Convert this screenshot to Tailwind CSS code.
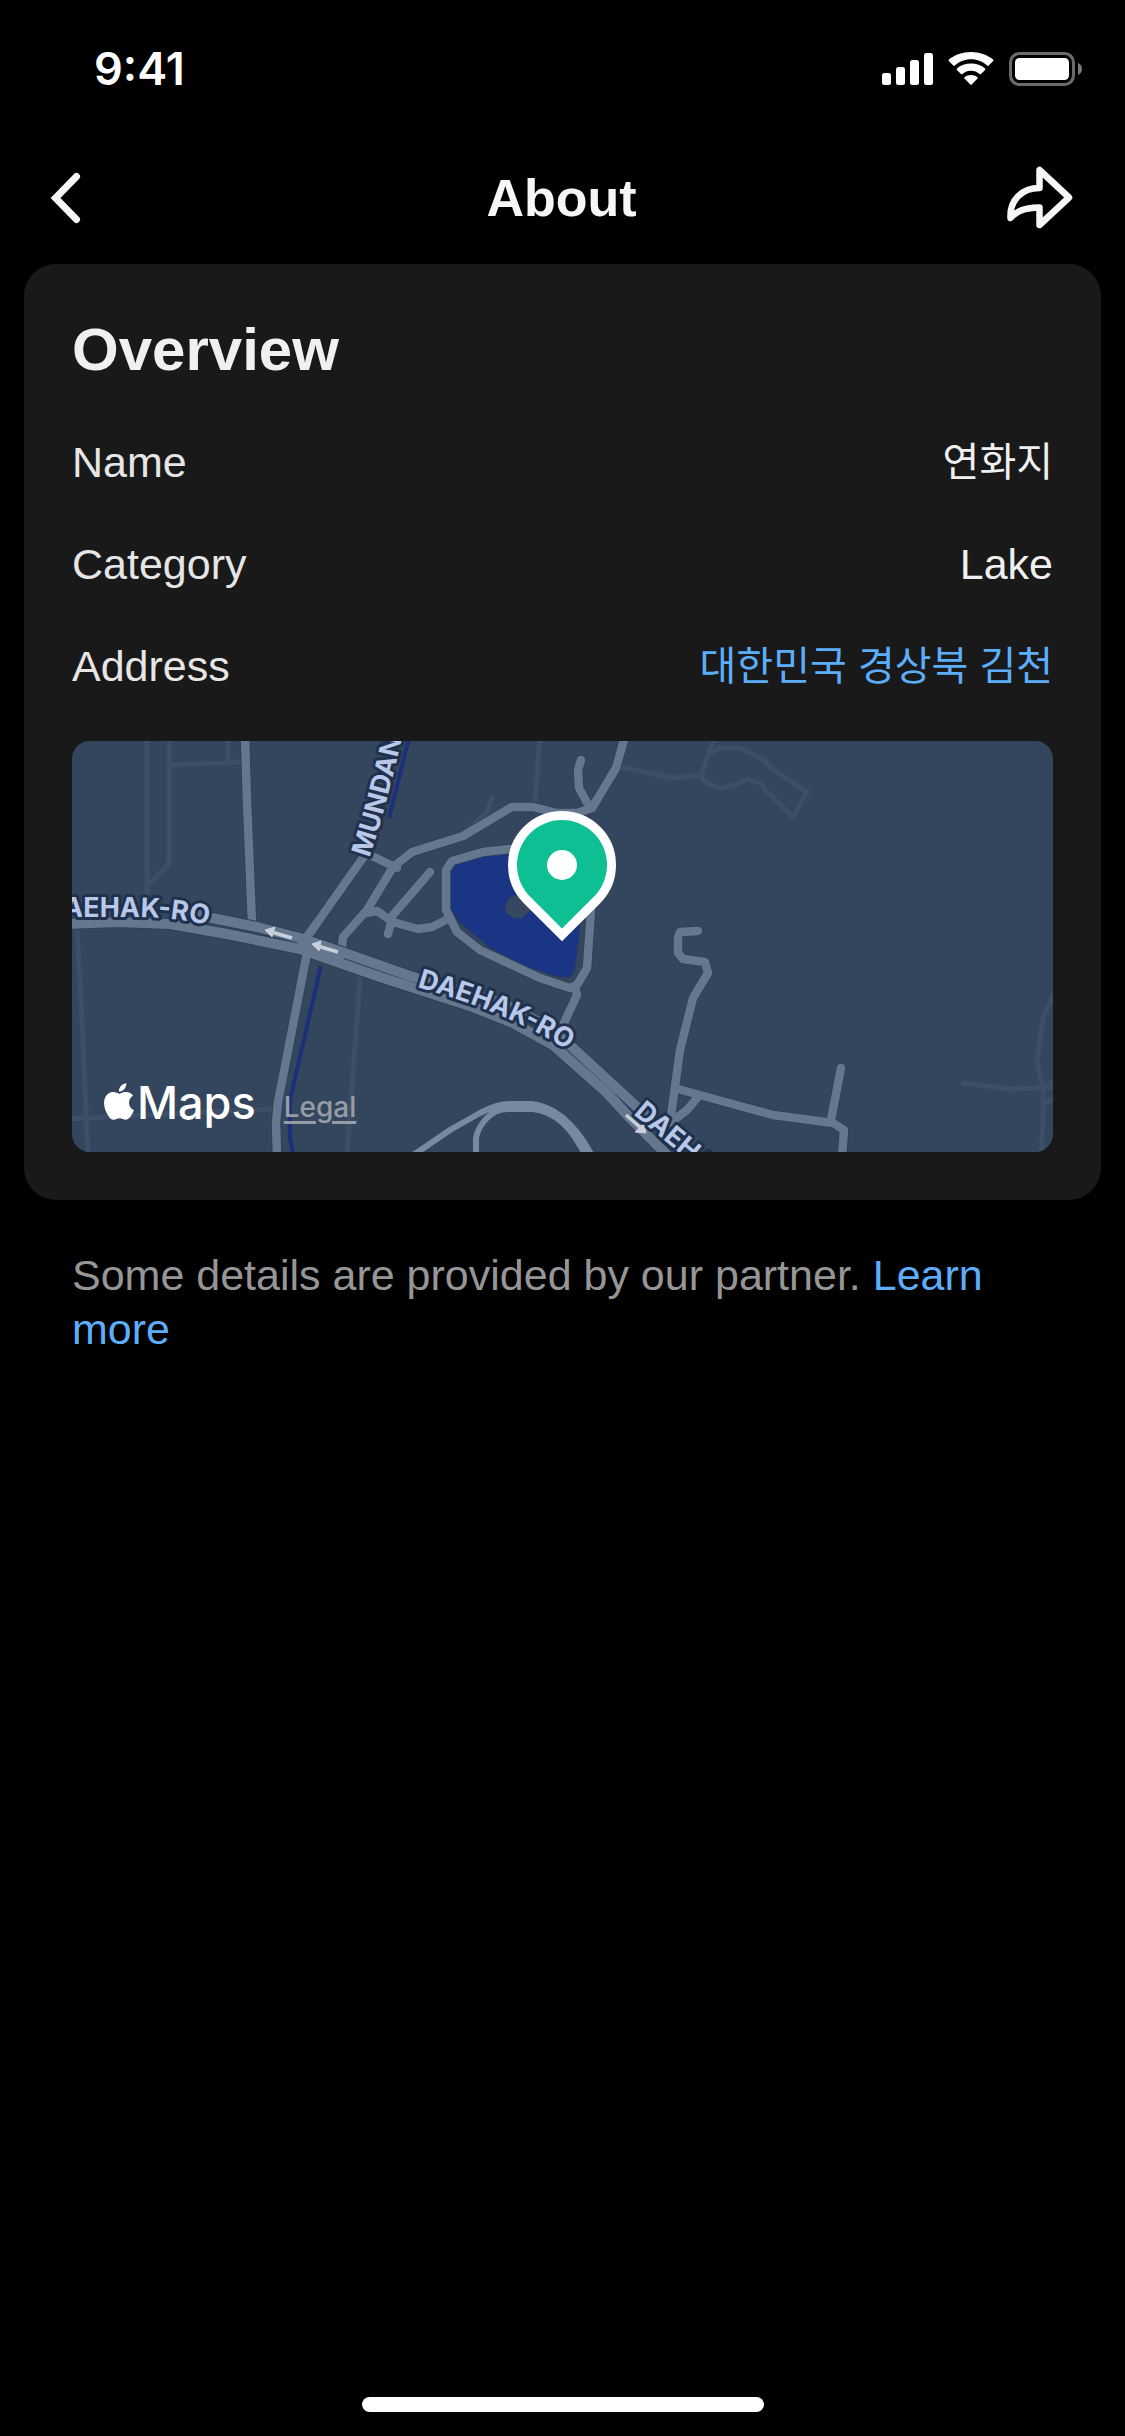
<!DOCTYPE html>
<html lang="en">
  <head>
    <meta charset="UTF-8" />
    <meta name="viewport" content="width=device-width, initial-scale=1.0" />
    <title>About</title>
    <script src="https://cdn.jsdelivr.net/npm/@tailwindcss/browser@4"></script>
  </head>
  <body
    class="min-h-screen bg-black flex flex-col text-[43px] leading-[54px] text-[#f0f0f0] font-['Liberation_Sans','Noto_Sans_CJK_KR',sans-serif]"
  >
    <!-- Status bar -->
    <div class="h-[132px] pt-1.5 pl-[94px] pr-[43px] flex items-center justify-between text-white">
      <span class="font-['Inter',sans-serif] font-semibold text-[45px]">9:41</span>
      <div class="flex items-center gap-[15px]">
        <svg class="w-[51px] h-[34px]" viewBox="0 0 51 34" fill="currentColor" aria-hidden="true">
          <rect x="0" y="21" width="9" height="12" rx="2.5" />
          <rect x="14" y="15" width="9" height="18" rx="2.5" />
          <rect x="28" y="8" width="9" height="25" rx="2.5" />
          <rect x="42" y="1" width="9" height="32" rx="2.5" />
        </svg>
        <svg class="w-[46px] h-[34px]" viewBox="0 0 46 34" fill="currentColor" aria-hidden="true">
          <path d="M23 7.2c6.3 0 12 2.4 16.3 6.4.4.4 1 .4 1.4 0l4.500-4.600c.4-.4.4-1.100 0-1.500C39.300 2.900 31.500 0 23 0S6.700 2.900.8 7.500c-.4.400-.4 1.100 0 1.500l4.500 4.600c.4.4 1 .4 1.400 0C11 9.600 16.700 7.200 23 7.200z" />
          <path d="M23 18.700c3.300 0 6.300 1.200 8.600 3.300.4.400 1 .4 1.400 0l4.100-4.100c.4-.4.4-1.100 0-1.500C33.300 13.200 28.400 11.500 23 11.500s-10.300 1.700-14.100 4.900c-.4.4-.4 1.100 0 1.500L13 22c.4.4 1 .4 1.400 0 2.300-2.100 5.300-3.300 8.600-3.300z" />
          <path d="M29.500 25.200c.4.4.4 1 0 1.400l-5.800 6c-.4.400-1 .4-1.400 0l-5.800-6c-.4-.4-.4-1 0-1.400C18.300 23.700 20.500 22.900 23 22.900s4.700.8 6.500 2.300z" />
        </svg>
        <svg class="w-[73px] h-[34px]" viewBox="0 0 73 34" fill="currentColor" aria-hidden="true">
          <rect x="1.5" y="1.5" width="63" height="31" rx="9" fill="none" stroke="#6b6b6b" stroke-width="3" />
          <rect x="6" y="6" width="54" height="22" rx="4.5" />
          <path d="M69 11c2.500 1 4 3.300 4 6s-1.500 5-4 6z" fill="#7a7a7a" />
        </svg>
      </div>
    </div>

    <!-- Navigation -->
    <header class="h-[132px] pl-12 pr-[50px] grid grid-cols-3 items-center">
      <button type="button" aria-label="Back" class="justify-self-start">
        <svg class="w-9 h-[60px]" viewBox="0 0 36 60" fill="none" stroke="#f6f6f6" stroke-width="7" stroke-linecap="round" aria-hidden="true">
          <path d="M28.500 8.500 7.500 30 28.500 51.500" />
        </svg>
      </button>
      <h1 class="text-center font-bold text-[52px] text-[#f6f6f6]">About</h1>
      <button type="button" aria-label="Share" class="justify-self-end">
        <svg class="w-[72px] h-[66px]" viewBox="0 0 72 66" fill="none" stroke="#f6f6f6" stroke-width="6.5" stroke-linejoin="round" stroke-linecap="round" aria-hidden="true">
          <path d="M36.500 5V23C19 23 6.500 35 7.500 53c7-8.500 18-10.500 29-10.500V60L66 32.500z" />
        </svg>
      </button>
    </header>

    <main>
      <section class="mx-6 px-12 pt-[52px] pb-12 rounded-[32px] bg-[#191919]">
        <h2 class="font-bold text-[60px] leading-[68px]">Overview</h2>

        <dl class="mt-[27px] text-[#e6e6e6]">
          <div class="h-[102px] flex items-center justify-between">
            <dt>Name</dt>
            <dd lang="ko" class="text-[40px] text-[#f0f0f0]">연화지</dd>
          </div>
          <div class="h-[102px] flex items-center justify-between">
            <dt>Category</dt>
            <dd class="text-[#f0f0f0]">Lake</dd>
          </div>
          <div class="h-[102px] flex items-center justify-between">
            <dt>Address</dt>
            <dd lang="ko" class="text-[40px]"><a href="#map" class="text-[#5caefa]">대한민국 경상북 김천</a></dd>
          </div>
        </dl>

        <div id="map" class="relative mt-6 rounded-[18px] overflow-hidden bg-[#34465e]">
          <svg class="block w-full" viewBox="0 0 981 411" fill="none" stroke-linejoin="round" role="img" aria-label="Map of 연화지">
            <defs>
              <path id="label-west" d="M-60 176H60Q100 176 136 184" />
              <path id="label-center" d="M345 246C400 262 450 279 510 318" />
              <path id="label-east" d="M561 373 660 456" />
              <path id="label-north" d="M297 117Q314 70 336 -30" />
            </defs>

            <!-- Lanes -->
            <g stroke="#3d4e67" stroke-width="5" stroke-linecap="round">
              <path d="M75 -5V152M97 -5V123L78 142M100 24 170 21M156 -5V21" />
              <path d="M5 187 10 280 16 415M-5 378 201 368M288 237 275 415" />
              <path d="M468 -5 463 59M420 57 415 71 398 86" />
              <path d="M550 26 601 37 628 34M644 -5 637 11 629 34 633 41 648 47 663 44 676 38 690 43 695 51 721 76 735 51 698 26 693 19 668 7H648L638 12" />
              <path d="M891 342 938 348 985 346M983 250 971 277 965 322 971 346V382L969 415M974 362 985 356M974 344 985 340" />
            </g>

            <!-- Streams and pond -->
            <path d="M337 -3 317 77M249 225 218 359V397L222 415" stroke="#1c2f7c" stroke-width="4" />
            <path d="M378 126 383 121 428 112 468 112 508 150V189L503 229 498 237 485 236 455 226 418 207 388 182 378 169Z" fill="#1b3585" stroke="#30405a" stroke-width="1" />
            <path d="M433 165 438 156 446 154 456 159 458 170 449 178 440 176 434 172Z" fill="#36475f" />

            <!-- Streets, dark casing first -->
            <g stroke="#2f3f57" stroke-width="10" stroke-linecap="round">
              <path d="M173 -5 175 60 180 182M235 196 288 121 294 113M235 212 206 361 204 382 205 415" />
              <path d="M270 206 271 196 295 169 321 126 340 111 391 95 440 66H461L485 72H505L520 67 544 27 553 -5M509 19 506 29 507 47 518 67M298 114 325 127" />
              <path d="M295 172 305 170 321 181 346 188 360 186 376 178M358 131 321 174 316 193" />
              <path d="M438 108 411 111 380 120 374 129V169L385 191 408 209 468 237 498 247 505 244 515 227 519 169 515 120 470 108ZM503 247 505 254 492 282" />
              <path d="M626 190 608 191 606 196V212L611 218 633 221 636 232 621 257 608 309 598 382M606 348 701 374 761 382 772 389 770 415M769 327 759 379M626 356 615 369 598 382" />
            </g>
            <g stroke="#65768f" stroke-width="8.5" stroke-linecap="round">
              <path d="M173 -5 175 60 180 182M235 196 288 121 294 113M235 212 206 361 204 382 205 415" />
              <path d="M270 206 271 196 295 169 321 126 340 111 391 95 440 66H461L485 72H505L520 67 544 27 553 -5M509 19 506 29 507 47 518 67M298 114 325 127" />
              <path d="M295 172 305 170 321 181 346 188 360 186 376 178M358 131 321 174 316 193" />
              <path d="M438 108 411 111 380 120 374 129V169L385 191 408 209 468 237 498 247 505 244 515 227 519 169 515 120 470 108ZM503 247 505 254 492 282" />
              <path d="M626 190 608 191 606 196V212L611 218 633 221 636 232 621 257 608 309 598 382M606 348 701 374 761 382 772 389 770 415M769 327 759 379M626 356 615 369 598 382" />
            </g>

            <!-- Daehak-ro, two carriageways -->
            <g stroke="#2f3f57" stroke-width="12">
              <path d="M125 174 185 186 228 197 270 211 338 235 430 262 475 285 501 307 565 366 600 398" />
              <path d="M-5 183 45 181 98 183 155 193 228 208 308 236 401 266 441 282 481 304 535 352 558 377 596 415" />
            </g>
            <g stroke="#65768f" stroke-width="10">
              <path d="M125 174 185 186 228 197 270 211 338 235 430 262 475 285 501 307 565 366 600 398" />
              <path d="M-5 183 45 181 98 183 155 193 228 208 308 236 401 266 441 282 481 304 535 352 558 377 596 415" />
              <path d="M226 202 272 217" stroke-width="14" />
              <path d="M229 204 245 182M236 208 233 222" stroke-width="8.5" />
            </g>

            <!-- Ramps -->
            <g stroke="#7888a1" stroke-width="6">
              <path d="M340 415 378 389 408 372Q425 363 438 363H460Q476 365 490 376 508 391 520 415" />
              <path d="M404 415V397Q406 386 415 377 423 368 436 368L461 368Q478 370 491 382 502 392 514 415" />
            </g>

            <!-- One-way arrows -->
            <g stroke="#c9cfda" stroke-width="3.5">
              <path d="M220 197 196 190M266 211 242 204M554 374 570 388" />
              <path d="M203 186 193 189 200 196ZM249 200 240 203 247 210ZM572 382 574 392 563 391Z" fill="#c9cfda" stroke-width="1" />
            </g>

            <g class="font-['Inter',sans-serif] font-bold text-[27px]" fill="#b7c8ea" stroke="#21314b" stroke-width="6" paint-order="stroke">
              <text text-anchor="end"><textPath href="#label-west" startOffset="100%">DAEHAK-RO</textPath></text>
              <text><textPath href="#label-center">DAEHAK-RO</textPath></text>
              <text><textPath href="#label-east">DAEHAK</textPath></text>
              <text><textPath href="#label-north">MUNDAN</textPath></text>
            </g>

            <!-- Pin -->
            <path d="M458.200 155.800A45 45 0 1 1 521.800 155.800L490 187.600Z" fill="#0dbf93" stroke="#fff" stroke-width="18" stroke-linejoin="miter" paint-order="stroke" />
            <circle cx="490" cy="124" r="15" fill="#fff" />
          </svg>

          <div class="absolute left-8 bottom-[22px] flex items-center gap-7 font-['Inter',sans-serif] font-medium">
            <span class="flex items-center gap-[3px] text-[45px] text-white">
              <svg class="w-[30px] h-[37px] mb-1" viewBox="2.2 0 19.6 24" fill="currentColor" aria-hidden="true">
                <path d="M12.152 6.896c-.948 0-2.415-1.078-3.960-1.040-2.040.027-3.910 1.183-4.961 3.014-2.117 3.675-.546 9.103 1.519 12.090 1.013 1.454 2.208 3.090 3.792 3.039 1.520-.065 2.090-.987 3.935-.987 1.831 0 2.350.987 3.960.948 1.637-.026 2.676-1.480 3.676-2.948 1.156-1.688 1.636-3.325 1.662-3.415-.039-.013-3.182-1.221-3.220-4.857-.026-3.040 2.480-4.494 2.597-4.559-1.429-2.090-3.623-2.324-4.390-2.376-2-.156-3.675 1.090-4.610 1.090zM15.530 3.830c.843-1.012 1.400-2.427 1.245-3.830-1.207.052-2.662.805-3.532 1.818-.780.896-1.454 2.338-1.273 3.714 1.338.104 2.715-.688 3.559-1.701" />
              </svg>
              Maps
            </span>
            <a href="#legal" class="pt-2 text-[28px] leading-8 text-[#979da6] underline underline-offset-4 decoration-3">Legal</a>
          </div>
        </div>
      </section>

      <p class="mx-6 mt-12 px-12 text-[#969696]">
        Some details are provided by our partner.
        <a href="#learn-more" class="text-[#5caefa]">Learn more</a>
      </p>
    </main>

    <!-- Home indicator -->
    <div class="mt-auto mb-6 mx-auto w-[402px] h-[15px] rounded-full bg-white"></div>
  </body>
</html>
